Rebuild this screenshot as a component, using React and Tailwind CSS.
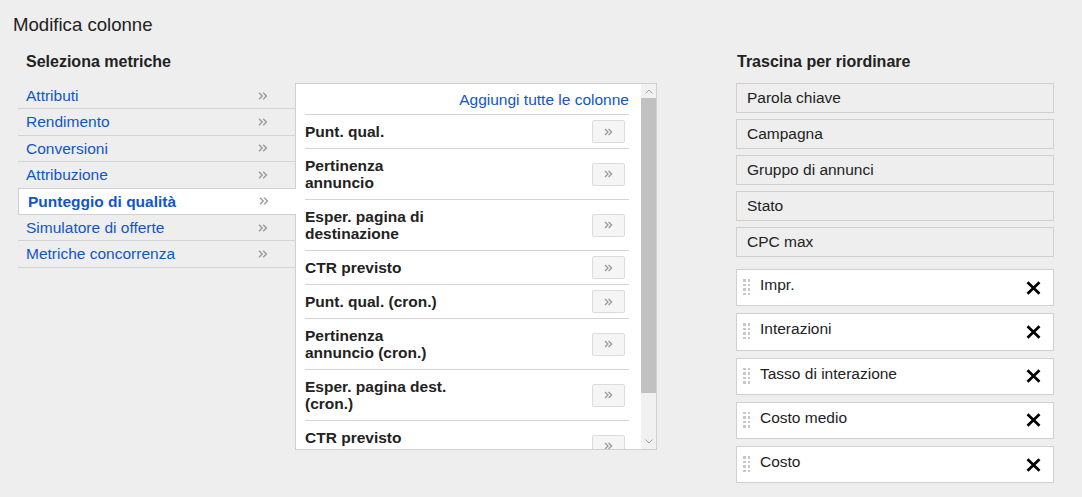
import React from 'react';

const categories = [
  'Attributi',
  'Rendimento',
  'Conversioni',
  'Attribuzione',
  'Punteggio di qualità',
  'Simulatore di offerte',
  'Metriche concorrenza',
];

const metrics = [
  ['Punt. qual.'],
  ['Pertinenza', 'annuncio'],
  ['Esper. pagina di', 'destinazione'],
  ['CTR previsto'],
  ['Punt. qual. (cron.)'],
  ['Pertinenza', 'annuncio (cron.)'],
  ['Esper. pagina dest.', '(cron.)'],
  ['CTR previsto', '(cron.)'],
];

const fixedCols = ['Parola chiave', 'Campagna', 'Gruppo di annunci', 'Stato', 'CPC max'];
const movableCols = ['Impr.', 'Interazioni', 'Tasso di interazione', 'Costo medio', 'Costo'];

const DoubleChevron = ({ className = '' }) => (
  <svg width="10" height="8" viewBox="0 0 10 8" className={className}>
    <path d="M1 0.8l3.2 3.2L1 7.2M5.2 0.8l3.2 3.2-3.2 3.2" fill="none" stroke="#9a9a9a" strokeWidth="1.4" />
  </svg>
);

const DragHandle = () => (
  <div className="grid grid-cols-2 gap-x-[2px] gap-y-[2px] mt-[9px]">
    {Array.from({ length: 8 }).map((_, i) => (
      <span key={i} className="block w-[2.5px] h-[2.5px] bg-[#c8c8c8]" />
    ))}
  </div>
);

const CloseIcon = () => (
  <svg width="15" height="14" viewBox="0 0 15 14">
    <path d="M1.5 1.2l12 11.6M13.5 1.2l-12 11.6" stroke="#000" strokeWidth="2.7" fill="none" />
  </svg>
);

export default function App() {
  return (
    <div className="w-full h-[497px] overflow-hidden bg-[#eeeeee] text-[#222] font-['Liberation_Sans',Arial,sans-serif]">
      <h1 className="pl-[13px] pt-[14px] text-[18.6px] leading-[22px] font-normal">Modifica colonne</h1>

      <div className="flex mt-[16px]">
        {/* Selezione metriche */}
        <div className="ml-[18px] w-[639px]">
          <h2 className="pl-[8px] text-[16px] leading-[20px] font-bold mb-[11px]">Seleziona metriche</h2>
          <div className="flex">
            <ul className="w-[278px] shrink-0">
              {categories.map((c, i) =>
                i === 4 ? (
                  <li
                    key={c}
                    className="relative z-10 -mt-px h-[27.4px] flex items-center justify-between pl-[9px] pr-[27px] bg-white border-l border-t border-b border-[#d0d0d0] text-[15.5px] font-bold text-[#1155cc]"
                  >
                    <span>{c}</span>
                    <DoubleChevron />
                  </li>
                ) : (
                  <li
                    key={c}
                    className="w-[277px] h-[26.4px] flex items-center justify-between pl-[8px] pr-[27px] border-b border-[#d4d4d4] text-[15.5px] text-[#1155cc]"
                  >
                    <span>{c}</span>
                    <DoubleChevron />
                  </li>
                )
              )}
            </ul>

            <div className="-ml-px w-[362px] h-[367px] flex bg-white border border-[#cfcfcf]">
              <div className="flex-1 overflow-hidden pl-[9px] pr-[12px]">
                <div className="pt-[7px] pb-[5px] border-b border-[#d4d4d4] text-right text-[15.5px] leading-[18px] text-[#1155cc]">
                  Aggiungi tutte le colonne
                </div>
                {metrics.map((lines, i) => (
                  <div key={i} className="flex items-center justify-between py-[5px] border-b border-[#d4d4d4]">
                    <div className="py-[3px] text-[15.5px] leading-[17px] font-bold">
                      {lines.map((l) => (
                        <div key={l}>{l}</div>
                      ))}
                    </div>
                    <button className="mr-[4px] w-[33px] h-[23px] flex items-center justify-center bg-[#f5f5f5] border border-[#dcdcdc] rounded-[2px]">
                      <svg width="9" height="8" viewBox="0 0 9 8">
                        <path d="M1 1l3 3-3 3M4.6 1l3 3-3 3" fill="none" stroke="#999" strokeWidth="1.3" />
                      </svg>
                    </button>
                  </div>
                ))}
              </div>

              {/* barra di scorrimento */}
              <div className="w-[15px] shrink-0 flex flex-col bg-[#f1f1f1]">
                <div className="h-[14px] flex items-center justify-center">
                  <svg width="8" height="5" viewBox="0 0 8 5">
                    <path d="M0.5 4.5L4 1l3.5 3.5" fill="none" stroke="#a3a3a3" strokeWidth="1" />
                  </svg>
                </div>
                <div className="h-[295px] bg-[#c1c1c1]" />
                <div className="flex-1" />
                <div className="h-[15px] flex items-center justify-center">
                  <svg width="8" height="5" viewBox="0 0 8 5">
                    <path d="M0.5 0.5L4 4l3.5-3.5" fill="none" stroke="#a3a3a3" strokeWidth="1" />
                  </svg>
                </div>
              </div>
            </div>
          </div>
        </div>

        {/* Ordine colonne */}
        <div className="ml-[79px] w-[318px]">
          <h2 className="pl-[1px] text-[16px] leading-[20px] font-bold mb-[11px]">Trascina per riordinare</h2>
          <div className="flex flex-col gap-[6px]">
            {fixedCols.map((c) => (
              <div key={c} className="h-[30px] flex items-center pl-[10px] border border-[#d0d0d0] text-[15.5px]">
                {c}
              </div>
            ))}
          </div>
          <div className="flex flex-col gap-[7px] mt-[12px]">
            {movableCols.map((c) => (
              <div key={c} className="h-[37.25px] flex items-start pl-[6px] pr-[12px] bg-white border border-[#d0d0d0]">
                <DragHandle />
                <span className="flex-1 ml-[10px] pt-[6px] text-[15.5px] leading-[18px]">{c}</span>
                <span className="self-center">
                  <CloseIcon />
                </span>
              </div>
            ))}
          </div>
        </div>
      </div>
    </div>
  );
}
